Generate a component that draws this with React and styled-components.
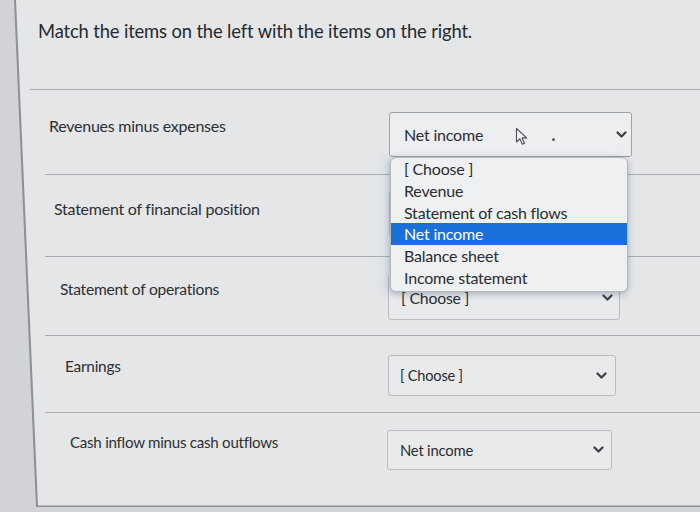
import React from 'react';
import styled, { createGlobalStyle } from 'styled-components';

const GlobalStyle = createGlobalStyle`
  html, body {
    margin: 0;
    padding: 0;
    background: #cfd0d3;
    font-family: Lato, 'Open Sans', Arial, sans-serif;
  }
`;

const Page = styled.div`
  width: 700px;
  height: 512px;
  overflow: hidden;
  background: #d2d3d6;
`;

// thin dark edge of the quiz card (photo is slightly skewed)
const Frame = styled.div`
  height: 507px;
  background: #8d9095;
  clip-path: polygon(14px 0, 100% 0, 100% 100%, 36px 100%);
`;

const Card = styled.div`
  height: 100%;
  background: #e4e6e8;
  clip-path: polygon(16px 0, 100% 0, 100% calc(100% - 1.5px), 38px calc(100% - 1.5px));
`;

const Header = styled.div`
  height: 90px;
  box-sizing: border-box;
  margin-left: 30px;
  padding: 20px 0 0 8px;
  border-bottom: 1px solid #a7abb0;
`;

const Title = styled.h1`
  margin: 0;
  font-size: 18.4px;
  line-height: 22px;
  font-weight: 400;
  color: #26292d;
  letter-spacing: -0.15px;
`;

const Row = styled.div`
  position: relative;
  display: flex;
  align-items: flex-start;
  height: ${(p) => p.$h}px;
  box-sizing: border-box;
  margin-left: 45px;
  border-bottom: ${(p) => (p.$last ? 'none' : '1px solid #a9adb2')};
`;

const Label = styled.div`
  flex: 0 0 ${(p) => p.$w}px;
  box-sizing: border-box;
  padding-left: ${(p) => p.$pad}px;
  margin-top: ${(p) => p.$top}px;
  font-size: ${(p) => p.$size}px;
  line-height: 20px;
  color: #2c3034;
  letter-spacing: -0.25px;
`;

const Select = styled.div`
  display: flex;
  align-items: center;
  justify-content: space-between;
  box-sizing: border-box;
  width: ${(p) => p.$w}px;
  height: ${(p) => p.$h}px;
  margin-top: ${(p) => p.$top}px;
  padding: 0 ${(p) => p.$right}px 0 ${(p) => p.$pad}px;
  background: ${(p) => (p.$open ? '#eceef0' : '#e8eaec')};
  border: 1px solid ${(p) => (p.$open ? '#9ea3a8' : '#b9bdc2')};
  border-radius: 3px;
  font-size: ${(p) => p.$size}px;
  color: #2a2d31;
  letter-spacing: -0.2px;
`;

const Value = styled.span`
  display: flex;
  align-items: center;
`;

const CursorMark = styled.span`
  display: flex;
  margin-left: 32px;
  margin-top: 4px;
`;

const Dot = styled.span`
  width: 3px;
  height: 3px;
  border-radius: 50%;
  background: #5a5d62;
  margin: 10px 0 0 24px;
`;

const Options = styled.ul`
  position: absolute;
  z-index: 5;
  top: 67px;
  left: 345px;
  width: 238px;
  margin: 0;
  padding: 0 0 2px;
  list-style: none;
  box-sizing: border-box;
  background: #eff0f2;
  border: 1px solid #b4b8bd;
  border-radius: 6px;
  box-shadow: 0 2px 6px rgba(40, 60, 90, 0.3), -6px 0 10px rgba(120, 160, 220, 0.15);
  overflow: hidden;
`;

const Option = styled.li`
  height: 21.8px;
  line-height: 21.8px;
  padding-left: 13px;
  font-size: 16px;
  letter-spacing: -0.2px;
  color: ${(p) => (p.$active ? '#ffffff' : '#2a2d31')};
  background: ${(p) => (p.$active ? '#1b6fd9' : 'transparent')};
`;

const Chevron = () => (
  <svg width="11" height="8" viewBox="0 0 11 8">
    <path d="M1.5 1.5 L5.5 5.5 L9.5 1.5" fill="none" stroke="#3a3d42" strokeWidth="2.2" strokeLinecap="round" strokeLinejoin="round" />
  </svg>
);

const Cursor = () => (
  <svg width="13" height="19" viewBox="0 0 13 19">
    <path d="M1.5 1.5 L1.5 15 L4.8 11.8 L7.4 17.2 L9.6 16.2 L7 10.9 L11.6 10.9 Z" fill="#f4f5f6" stroke="#4a4d52" strokeWidth="1.1" strokeLinejoin="round" />
  </svg>
);

const options = ['[ Choose ]', 'Revenue', 'Statement of cash flows', 'Net income', 'Balance sheet', 'Income statement'];

const rows = [
  { label: 'Revenues minus expenses', value: 'Net income', h: 85, lx: 49, ly: 26, ls: 16, sx: 389, sy: 22, sw: 243, sh: 45, pad: 14, right: 4, vs: 16, open: true },
  { label: 'Statement of financial position', value: '', h: 82, lx: 54, ly: 24, ls: 16, sx: 389, sy: 16, sw: 238, sh: 45, pad: 13, right: 5, vs: 16 },
  { label: 'Statement of operations', value: '[ Choose ]', h: 79, lx: 60, ly: 22, ls: 15.6, sx: 388, sy: 18, sw: 232, sh: 45, pad: 12, right: 6, vs: 15.8 },
  { label: 'Earnings', value: '[ Choose ]', h: 77, lx: 65, ly: 20, ls: 15.4, sx: 388, sy: 19, sw: 228, sh: 41, pad: 11, right: 8, vs: 14.6 },
  { label: 'Cash inflow minus cash outflows', value: 'Net income', h: 94, lx: 70, ly: 19, ls: 15.1, sx: 387, sy: 17, sw: 225, sh: 40, pad: 12, right: 7, vs: 14.8 },
];

export default function App() {
  return (
    <Page>
      <GlobalStyle />
      <Frame>
        <Card>
          <Header>
            <Title>Match the items on the left with the items on the right.</Title>
          </Header>
          {rows.map((r, i) => (
            <Row key={r.label} $h={r.h} $last={i === rows.length - 1}>
              <Label $w={r.sx - 45} $pad={r.lx - 45} $top={r.ly} $size={r.ls}>{r.label}</Label>
              <Select $w={r.sw} $h={r.sh} $top={r.sy} $pad={r.pad} $right={r.right} $size={r.vs} $open={r.open}>
                {r.open ? (
                  <Value>
                    {r.value}
                    <CursorMark><Cursor /></CursorMark>
                    <Dot />
                  </Value>
                ) : (
                  <span>{r.value}</span>
                )}
                <Chevron />
              </Select>
              {r.open && (
                <Options>
                  {options.map((o) => (
                    <Option key={o} $active={o === 'Net income'}>{o}</Option>
                  ))}
                </Options>
              )}
            </Row>
          ))}
        </Card>
      </Frame>
    </Page>
  );
}
